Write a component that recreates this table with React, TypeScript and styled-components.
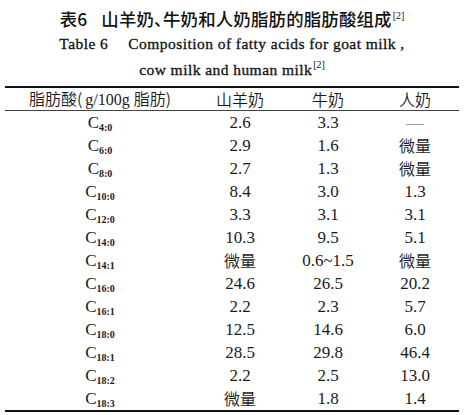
import React from "react";
import styled, { createGlobalStyle } from "styled-components";

const GlobalStyle = createGlobalStyle`
  html, body {
    margin: 0;
    padding: 0;
    background: #ffffff;
  }
  body {
    font-family: "Liberation Serif", "Noto Sans CJK SC", serif;
    color: #1a1a1a;
  }
`;

const Page = styled.div`
  width: 464px;
  height: 415px;
  display: flex;
  flex-direction: column;
  align-items: center;
  overflow: hidden;
`;

const Caption = styled.div`
  display: flex;
  flex-direction: column;
  align-items: center;
  padding-top: 7px;
  width: 100%;
`;

const CnTitle = styled.div`
  font-family: "Noto Sans CJK SC", sans-serif;
  font-weight: 500;
  font-size: 17.4px;
  line-height: 24px;
  letter-spacing: 0.2px;
  font-feature-settings: "halt" 1;
  color: #111;
`;

const TitleNo = styled.span`
  margin-right: 14px;
`;

const EnTitle = styled.div`
  font-family: "Liberation Serif", serif;
  font-weight: normal;
  font-size: 15.5px;
  letter-spacing: 0.45px;
  -webkit-text-stroke: 0.3px #111;
  line-height: 26px;
  color: #111;
  text-align: center;
  &:first-of-type {
    margin-top: 2px;
  }
`;

const EnNo = styled.span`
  margin-right: 20px;
`;

const Ref = styled.sup`
  font-family: "Liberation Serif", serif;
  font-weight: normal;
  font-size: 10px;
  line-height: 0;
  vertical-align: 7px;
  margin-left: 1px;
  letter-spacing: 0;
  -webkit-text-stroke: 0;
`;

const Table = styled.table`
  width: 454px;
  margin-top: 3px;
  border-collapse: collapse;
  border-top: 2px solid #111;
  border-bottom: 2px solid #111;
`;

const HeadCell = styled.th<{ w: number }>`
  width: ${(p) => p.w}px;
  height: 21px;
  padding: 0;
  font-family: "Noto Sans CJK SC", sans-serif;
  font-weight: 350;
  font-size: 16px;
  line-height: 21px;
  text-align: center;
  color: #1a1a1a;
  border-bottom: 1px solid #444;
`;

const Unit = styled.span`
  font-family: "Liberation Serif", serif;
  font-size: 16px;
  margin: 0 4px 0 3px;
`;

const Cell = styled.td<{ cjk?: boolean }>`
  height: 23px;
  padding: 0;
  text-align: center;
  font-family: ${(p) =>
    p.cjk ? '"Noto Sans CJK SC", sans-serif' : '"Liberation Serif", serif'};
  font-weight: ${(p) => (p.cjk ? 350 : "normal")};
  font-size: ${(p) => (p.cjk ? "16px" : "17px")};
  line-height: 23px;
  color: #1a1a1a;
`;

const Acid = styled.span`
  font-family: "Liberation Serif", serif;
  font-size: 17px;
`;

const Sub = styled.sub`
  font-size: 10px;
  font-weight: bold;
  vertical-align: -3px;
  line-height: 0;
`;

const Dash = styled.span`
  display: inline-block;
  width: 18px;
  height: 1px;
  background: #999;
  vertical-align: middle;
`;

const rows: [string, string, string, string][] = [
  ["4:0", "2.6", "3.3", "—"],
  ["6:0", "2.9", "1.6", "微量"],
  ["8:0", "2.7", "1.3", "微量"],
  ["10:0", "8.4", "3.0", "1.3"],
  ["12:0", "3.3", "3.1", "3.1"],
  ["14:0", "10.3", "9.5", "5.1"],
  ["14:1", "微量", "0.6~1.5", "微量"],
  ["16:0", "24.6", "26.5", "20.2"],
  ["16:1", "2.2", "2.3", "5.7"],
  ["18:0", "12.5", "14.6", "6.0"],
  ["18:1", "28.5", "29.8", "46.4"],
  ["18:2", "2.2", "2.5", "13.0"],
  ["18:3", "微量", "1.8", "1.4"],
];

const isCjk = (v: string) => /[\u4e00-\u9fff]/.test(v);

const Value = ({ v }: { v: string }) => {
  if (v === "—") {
    return (
      <Cell>
        <Dash />
      </Cell>
    );
  }
  return <Cell cjk={isCjk(v)}>{v}</Cell>;
};

export default function App() {
  return (
    <Page>
      <GlobalStyle />
      <Caption>
        <CnTitle>
          <TitleNo>表6</TitleNo>
          山羊奶、牛奶和人奶脂肪的脂肪酸组成
          <Ref>[2]</Ref>
        </CnTitle>
        <EnTitle>
          <EnNo>Table 6</EnNo>Composition of fatty acids for goat milk ,
        </EnTitle>
        <EnTitle>
          cow milk and human milk<Ref>[2]</Ref>
        </EnTitle>
      </Caption>
      <Table>
        <thead>
          <tr>
            <HeadCell w={190}>
              脂肪酸(<Unit>g/100g</Unit>脂肪)
            </HeadCell>
            <HeadCell w={90}>山羊奶</HeadCell>
            <HeadCell w={86}>牛奶</HeadCell>
            <HeadCell w={88}>人奶</HeadCell>
          </tr>
        </thead>
        <tbody>
          {rows.map(([acid, goat, cow, human]) => (
            <tr key={acid}>
              <Cell>
                <Acid>C</Acid>
                <Sub>{acid}</Sub>
              </Cell>
              <Value v={goat} />
              <Value v={cow} />
              <Value v={human} />
            </tr>
          ))}
        </tbody>
      </Table>
    </Page>
  );
}
